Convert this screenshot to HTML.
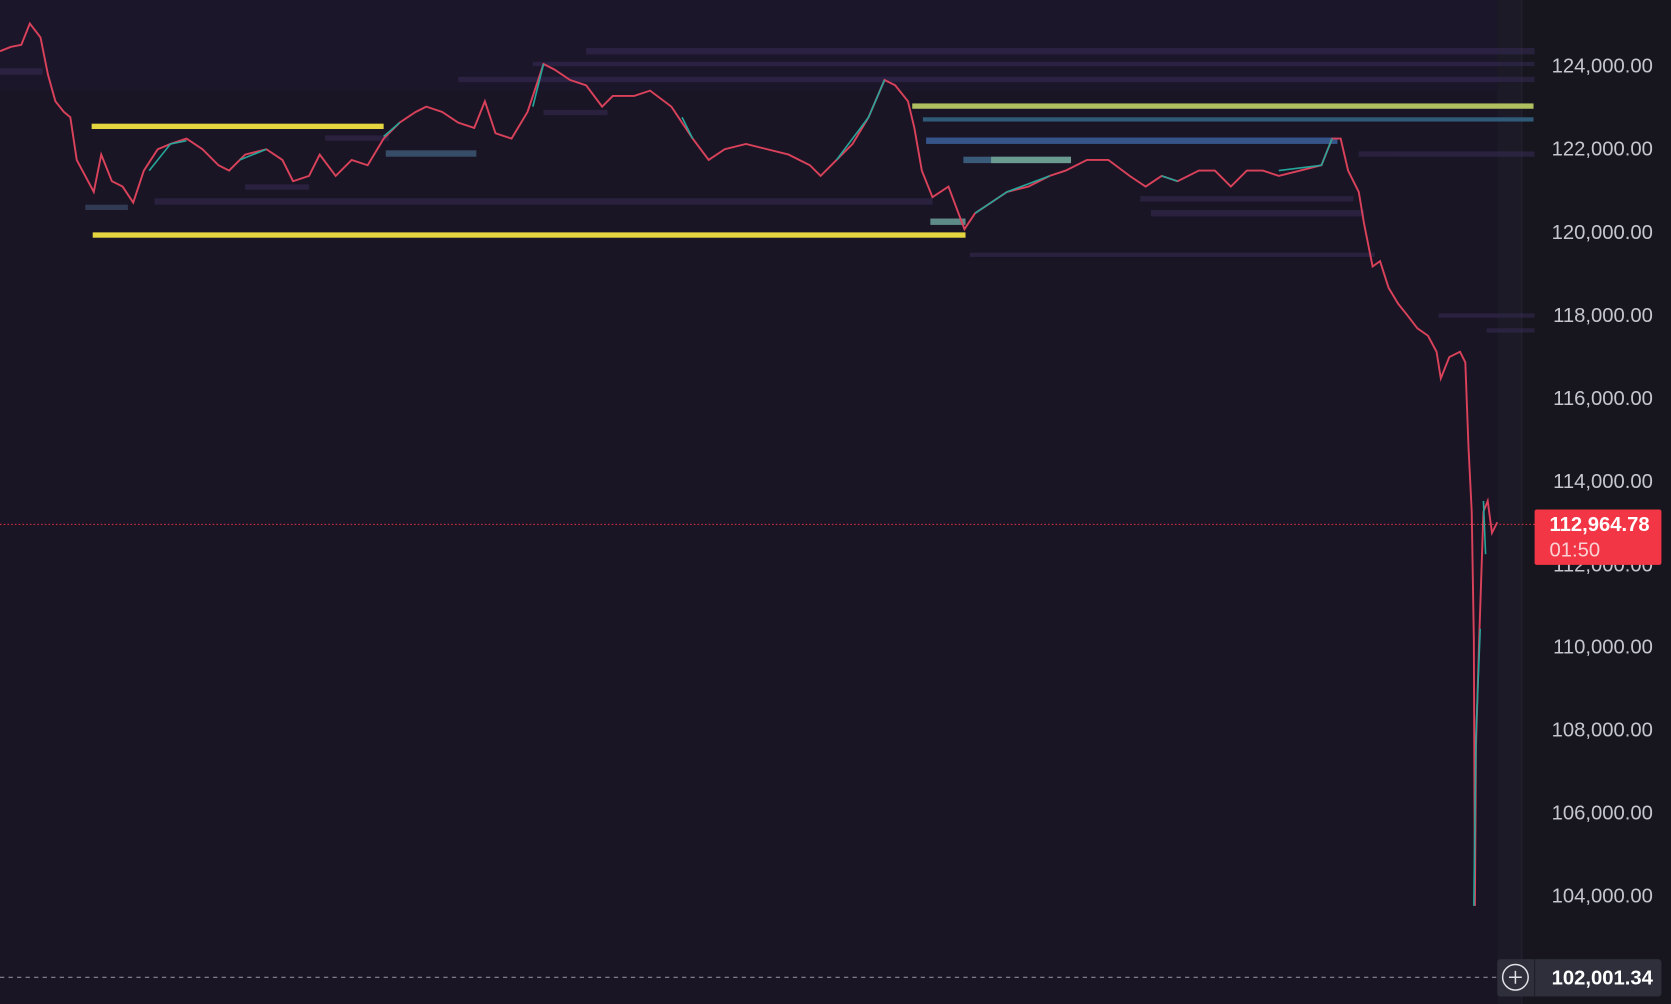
<!DOCTYPE html>
<html><head><meta charset="utf-8"><style>
html,body{margin:0;padding:0;background:#1a1525;overflow:hidden}
svg{display:block}
</style></head><body>
<svg width="1671" height="1004" viewBox="0 0 1568 942" xmlns="http://www.w3.org/2000/svg" font-family="Liberation Sans, sans-serif">
<rect width="1568" height="942" fill="#1a1525"/>
<rect x="0" y="0" width="1405" height="85" fill="#1e1730" opacity="0.6"/>
<rect x="1405" y="0" width="23" height="942" fill="#1b1a26"/>
<rect x="1428" y="0" width="140" height="942" fill="#17161f"/>
<line x1="1428" y1="0" x2="1428" y2="942" stroke="#24232e"/>
<g fill="#3a2d5a" opacity="0.5">
<rect x="550" y="45" width="890" height="6"/><rect x="430" y="72" width="1010" height="5"/><rect x="500" y="58" width="940" height="4"/>
<rect x="145" y="186" width="730" height="6"/><rect x="230" y="173" width="60" height="5"/><rect x="1080" y="197" width="200" height="6"/>
<rect x="910" y="237" width="380" height="4"/><rect x="1350" y="294" width="90" height="4"/><rect x="1395" y="308" width="45" height="4"/>
<rect x="1275" y="142" width="165" height="5"/><rect x="1070" y="184" width="200" height="5"/><rect x="305" y="127" width="60" height="5"/>
<rect x="0" y="64" width="40" height="6"/><rect x="510" y="103" width="60" height="5"/>
</g>
<rect x="80" y="192" width="40" height="5" fill="#3b4a6a" opacity="0.7"/>
<rect x="362" y="141" width="85" height="6" fill="#3e5a78" opacity="0.8"/>
<rect x="873" y="205" width="33" height="6" fill="#5e8a88"/>
<rect x="904" y="147" width="100" height="6" fill="#3a5a7a"/>
<rect x="930" y="147" width="75" height="6" fill="#6a9a90"/>
<rect x="86" y="116" width="274" height="5" fill="#e5d640"/>
<rect x="87" y="218" width="819" height="5" fill="#e5d640"/>
<rect x="856" y="97" width="583" height="5" fill="#b0c060"/>
<rect x="866" y="110" width="573" height="4" fill="#2f5a78"/>
<rect x="869" y="129" width="386" height="6" fill="#35548a"/>
<line x1="0" y1="492" x2="1440" y2="492" stroke="#e0303f" stroke-width="1" stroke-dasharray="1.5 2"/>
<line x1="0" y1="917" x2="1405" y2="917" stroke="#8a8a95" stroke-width="1" stroke-dasharray="4 4"/>
<polyline fill="none" stroke="#d9425a" stroke-width="1.8" points="0,48 10,44 20,42 28,22 38,35 45,70 52,95 60,105 66,110 72,150 80,165 88,180 95,145 105,170 115,175 125,190 135,160 148,140 160,135 175,130 190,140 205,155 215,160 230,145 250,140 265,150 275,170 290,165 300,145 315,165 330,150 345,155 360,130 375,115 390,105 400,100 415,105 430,115 445,120 455,95 465,125 480,130 495,105 510,60 520,65 535,75 550,80 565,100 575,90 595,90 610,85 630,100 650,130 665,150 680,140 700,135 720,140 740,145 760,155 770,165 785,150 800,135 815,110 830,75 840,80 852,95 858,120 865,160 875,185 890,175 905,215 915,200 930,190 945,180 965,175 985,165 1000,160 1020,150 1040,150 1060,165 1075,175 1090,165 1105,170 1125,160 1140,160 1155,175 1170,160 1185,160 1200,165 1220,160 1240,155 1250,130 1258,130 1265,160 1275,180 1280,210 1288,250 1295,245 1303,270 1312,285 1320,295 1330,308 1340,315 1348,330 1352,355 1360,335 1370,330 1375,340 1378,420 1381,480 1383,600 1384,850 1385,700 1388,600 1392,480 1396,470 1400,500 1405,490"/>
<g stroke="#26a69a" stroke-width="1.5" fill="none">
<polyline points="140,160 160,135 175,132"/><polyline points="225,150 250,140"/><polyline points="360,128 375,115"/><polyline points="500,100 510,60"/>
<polyline points="640,110 650,130"/><polyline points="785,150 815,110 830,75"/><polyline points="915,200 945,180 985,165"/><polyline points="1090,165 1105,170"/>
<polyline points="1200,160 1240,155 1250,130"/><polyline points="1383,850 1385,690 1389,590"/><polyline points="1392,470 1394,520"/>
</g>
<g fill="#c6c6cf" font-size="19" text-anchor="end">
<text x="1551" y="68">124,000.00</text><text x="1551" y="146">122,000.00</text><text x="1551" y="224">120,000.00</text>
<text x="1551" y="302">118,000.00</text><text x="1551" y="380">116,000.00</text><text x="1551" y="458">114,000.00</text>
<text x="1551" y="536">112,000.00</text><text x="1551" y="613">110,000.00</text><text x="1551" y="691">108,000.00</text>
<text x="1551" y="769">106,000.00</text><text x="1551" y="847">104,000.00</text>
</g>
<rect x="1440" y="478" width="119" height="52" rx="2" fill="#f23645"/>
<text x="1454" y="498" fill="#fff" font-size="19" font-weight="bold">112,964.78</text>
<text x="1454" y="522" fill="#fbd0d4" font-size="19">01:50</text>
<rect x="1405" y="900" width="154" height="35" rx="3" fill="#2e2f3a"/>
<line x1="1440" y1="900" x2="1440" y2="935" stroke="#1e1f28"/>
<circle cx="1422" cy="917" r="12" fill="none" stroke="#e0e0e6" stroke-width="1.4"/>
<path d="M1416 917h12M1422 911v12" stroke="#e0e0e6" stroke-width="1.4"/>
<text x="1551" y="924" fill="#fff" font-size="19" font-weight="bold" text-anchor="end">102,001.34</text>
</svg>
</body></html>
